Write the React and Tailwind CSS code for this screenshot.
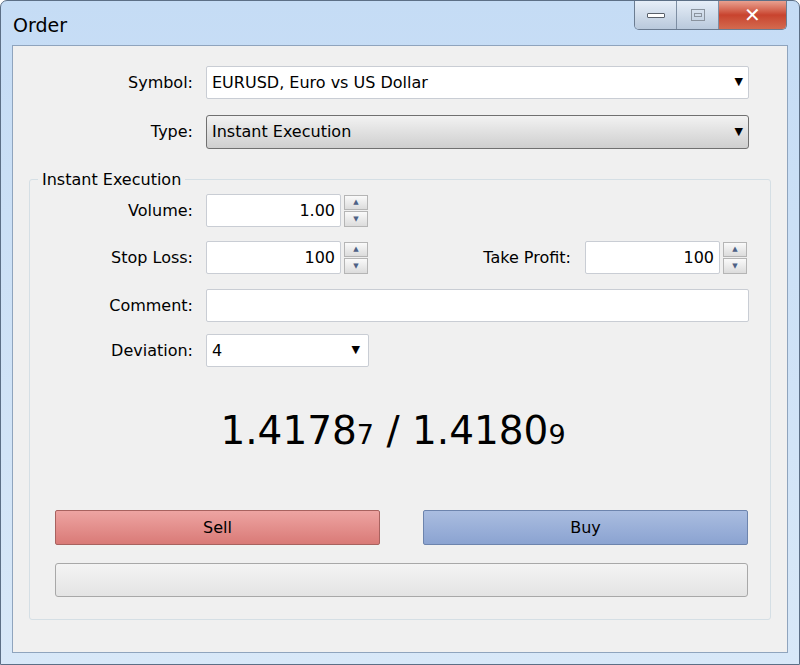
const Spin = () => (
  <div className="flex flex-col gap-[1px] ml-[3px] w-[24px] h-[32px]">
    {['▲', '▼'].map((c) => (
      <div key={c} className="flex-1 border border-[#b5b5b5] bg-gradient-to-b from-[#fafafa] to-[#dcdcdc] flex items-center justify-center text-[7px] text-[#4d6185]">{c}</div>
    ))}
  </div>
);

const Field = ({ w, children, right }) => (
  <div className={`${w} h-[33px] bg-white border border-[#c9cdd4] rounded-[2px] flex items-center px-[5px] text-[16px] ${right ? 'justify-end' : ''}`}>{children}</div>
);

const Label = ({ children, w = 'w-[192px]' }) => (
  <div className={`${w} text-right pr-[13px] text-[16px]`}>{children}</div>
);

export default function App() {
  return (
    <div className="w-[800px] h-[665px] bg-gradient-to-b from-[#c5dcf5] to-[#d8e8f8] border border-[#5c6f86] rounded-t-[7px] flex flex-col text-black" style={{ fontFamily: 'Tahoma, "DejaVu Sans", "Liberation Sans", sans-serif' }}>
      <div className="h-[44px] flex items-start pl-[12px] pr-[12px]">
        <div className="pt-[10px] text-[19px] flex-1">Order</div>
        <div className="flex h-[29px] border border-[#6b7c91] border-t-0 rounded-b-[5px] overflow-hidden">
          <div className="w-[42px] bg-gradient-to-b from-[#e6eef8] to-[#b9c9dc] border-r border-[#7d8ea3] flex items-center justify-center"><div className="w-[18px] h-[5px] bg-white border border-[#59606a] rounded-[1px]" /></div>
          <div className="w-[42px] bg-gradient-to-b from-[#e6eef8] to-[#b9c9dc] border-r border-[#7d8ea3] flex items-center justify-center"><div className="w-[14px] h-[12px] border border-[#8a939e] flex items-center justify-center"><div className="w-[8px] h-[4px] border border-[#8a939e]" /></div></div>
          <div className="w-[67px] bg-gradient-to-b from-[#e8a090] via-[#c8432e] to-[#d36a4f] flex items-center justify-center text-white font-bold text-[20px]">✕</div>
        </div>
      </div>
      <div className="mx-[11px] mb-[11px] flex-1 bg-[#f0f0f0] border border-[#8fa4bd] flex flex-col">
        <div className="flex items-center mt-[20px]">
          <Label w="w-[193px]">Symbol:</Label>
          <Field w="w-[543px]"><span className="flex-1">EURUSD, Euro vs US Dollar</span><span className="text-[11px]">▼</span></Field>
        </div>
        <div className="flex items-center mt-[16px]">
          <Label w="w-[193px]">Type:</Label>
          <div className="w-[543px] h-[34px] rounded-[3px] border border-[#707070] bg-gradient-to-b from-[#f2f2f2] to-[#cfcfcf] flex items-center px-[5px] text-[16px]"><span className="flex-1">Instant Execution</span><span className="text-[11px]">▼</span></div>
        </div>
        <div className="relative mx-[16px] mt-[30px] flex-1 mb-[32px] border border-[#d5dfe5] rounded-[3px] flex flex-col">
          <div className="absolute -top-[12px] left-[8px] bg-[#f0f0f0] px-[4px] text-[16px]">Instant Execution</div>
          <div className="flex items-center mt-[14px]">
            <Label w="w-[176px]">Volume:</Label>
            <Field w="w-[135px]" right>1.00</Field><Spin />
          </div>
          <div className="flex items-center mt-[14px]">
            <Label w="w-[176px]">Stop Loss:</Label>
            <Field w="w-[135px]" right>100</Field><Spin />
            <div className="w-[217px] text-right pr-[14px] text-[16px]">Take Profit:</div>
            <Field w="w-[135px]" right>100</Field><Spin />
          </div>
          <div className="flex items-center mt-[15px]">
            <Label w="w-[176px]">Comment:</Label>
            <Field w="w-[543px]" />
          </div>
          <div className="flex items-center mt-[12px]">
            <Label w="w-[176px]">Deviation:</Label>
            <Field w="w-[163px]"><span className="flex-1">4</span><span className="text-[11px] pr-[3px]">▼</span></Field>
          </div>
          <div className="flex justify-center items-baseline mt-[44px] text-[39px] leading-none pr-[14px]">
            1.4178<span className="text-[27px]">7</span>&nbsp;/&nbsp;1.4180<span className="text-[27px]">9</span>
          </div>
          <div className="flex justify-between ml-[25px] mr-[22px] mt-[60px]">
            <div className="w-[325px] h-[35px] border border-[#a8625f] rounded-[2px] bg-gradient-to-b from-[#eda4a2] to-[#d97a77] flex items-center justify-center text-[16px]">Sell</div>
            <div className="w-[325px] h-[35px] border border-[#6d84ad] rounded-[2px] bg-gradient-to-b from-[#aabde0] to-[#8ba3d1] flex items-center justify-center text-[16px]">Buy</div>
          </div>
          <div className="ml-[25px] mr-[22px] mt-[18px] h-[34px] border border-[#a8a8a8] rounded-[3px] bg-gradient-to-b from-[#f4f4f4] to-[#e4e4e4]" />
        </div>
      </div>
    </div>
  );
}
